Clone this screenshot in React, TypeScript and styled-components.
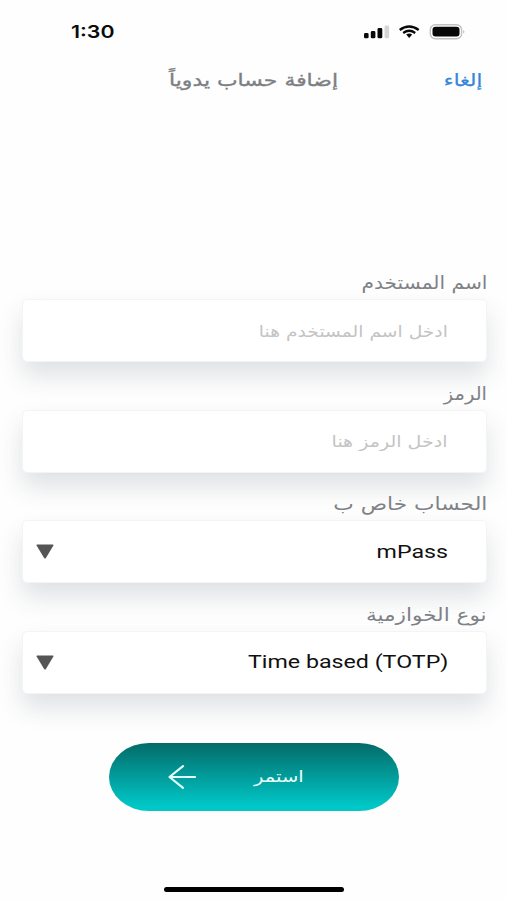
import React from 'react';
import styled, { createGlobalStyle } from 'styled-components';

const GlobalStyle = createGlobalStyle`
  * { box-sizing: border-box; }
  body {
    margin: 0;
    background: #fefefe;
    font-family: "DejaVu Sans", sans-serif;
  }
`;

const Screen = styled.main`
  width: 507px;
  height: 900px;
  overflow: hidden;
  display: flex;
  flex-direction: column;
  background: #fefefe;
`;

const Stretch = styled.span<{ $x?: number; $y?: number; $from?: string }>`
  display: inline-block;
  white-space: nowrap;
  transform: scale(${p => p.$x ?? 1}, ${p => p.$y ?? 1});
  transform-origin: ${p => p.$from ?? 'right'} center;
`;

const StatusBar = styled.header`
  height: 64px;
  flex: none;
  display: flex;
  align-items: center;
  justify-content: space-between;
  padding: 0 41px 0 71px;
`;

const Clock = styled.time`
  font: 600 17.5px/24px Inter, sans-serif;
  color: #0b0b0b;
`;

const StatusIcons = styled.svg`
  display: block;
  width: 104px;
  height: 20px;
`;

const NavBar = styled.nav`
  height: 32px;
  flex: none;
  direction: rtl;
  display: grid;
  grid-template-columns: 144px 1fr;
  align-items: center;
  padding: 0 25px 0 20px;
  line-height: 32px;
`;

const Cancel = styled.a`
  color: #3585da;
  font-size: 17px;
  -webkit-text-stroke: 0.25px #3585da;
`;

const Title = styled.h1`
  margin: 0;
  color: #7c7f83;
  font-size: 17px;
  font-weight: 400;
  -webkit-text-stroke: 0.35px #7c7f83;
`;

const Form = styled.form`
  direction: rtl;
  display: flex;
  flex-direction: column;
  padding: 171px 20px 0 22px;
`;

const Field = styled.div`
  height: 110.5px;
  display: flex;
  flex-direction: column;
`;

const Label = styled.label`
  height: 32px;
  line-height: 31px;
  font-size: 18px;
  color: #7e8287;
`;

const Box = styled.div`
  height: 63px;
  flex: none;
  display: flex;
  align-items: center;
  justify-content: space-between;
  padding: 0 38px 0 13px;
  background: #fff;
  border: 1px solid #f3f4f5;
  border-radius: 5px;
  box-shadow: 0 14px 24px rgba(45, 60, 75, 0.15);
`;

const Placeholder = styled.span`
  font-size: 17px;
  color: #c4c4c4;
`;

const Value = styled.span`
  font: 400 19.5px/28px Roboto, sans-serif;
  direction: ltr;
  color: #101010;
`;

const Caret = styled.svg`
  width: 18px;
  height: 15px;
  fill: #555;
`;

const Submit = styled.button`
  width: 290px;
  height: 68px;
  flex: none;
  margin: 34px 0 0 109px;
  padding: 0 95px 0 59px;
  border: 0;
  border-radius: 40px / 34px;
  display: flex;
  align-items: center;
  justify-content: space-between;
  background: linear-gradient(#036b68, #00c8c8 94%);
  color: #e9fffd;
  font: 400 16px/24px "DejaVu Sans", sans-serif;
`;

const Arrow = styled.svg`
  width: 28px;
  height: 24px;
  fill: none;
  stroke: #e2fffd;
  stroke-width: 2.2;
  stroke-linecap: round;
  stroke-linejoin: round;
`;

const HomeIndicator = styled.div`
  width: 180px;
  height: 5px;
  flex: none;
  margin: auto 0 8.5px 164px;
  border-radius: 3px;
  background: #000;
`;

const fields = [
  { label: 'اسم المستخدم', text: 'ادخل اسم المستخدم هنا', lx: 1.12, tx: 1.1 },
  { label: 'الرمز', text: 'ادخل الرمز هنا', lx: 1.08, tx: 1.12 },
  { label: 'الحساب خاص ب', text: 'mPass', select: true, lx: 1.21, tx: 1.19 },
  { label: 'نوع الخوازمية', text: 'Time based (TOTP)', select: true, lx: 1.2, tx: 1.19 },
];

export default function App() {
  return (
    <Screen>
      <GlobalStyle />
      <StatusBar>
        <Clock><Stretch $x={1.22} $from="left">1:30</Stretch></Clock>
        <StatusIcons viewBox="0 0 104 20">
          <g fill="#080808">
            <rect x="2" y="11" width="4.6" height="5.3" rx="1.4" />
            <rect x="8.8" y="9" width="4.6" height="7.3" rx="1.4" />
            <rect x="15.5" y="6" width="4.8" height="10.3" rx="1.4" />
            <rect x="22.5" y="3.5" width="4.6" height="12.8" rx="1.4" fill="#d5d5d5" />
            <path d="M44.2 12.6q3-2.3 6 0l-3 3.3z" />
            <rect x="70.5" y="4.8" width="27" height="9.8" rx="3" />
          </g>
          <g fill="none" stroke="#080808" strokeWidth="2.3">
            <path d="M37.7 8q9.5-7 19 0M41.2 11q6-4.4 12 0" />
          </g>
          <rect x="68.3" y="2.7" width="31.3" height="14" rx="5" fill="none" stroke="#c2c2c2" strokeWidth="1.4" />
          <path d="M101.4 8v3.6q2-1.8 0-3.6" fill="#aaa" />
        </StatusIcons>
      </StatusBar>
      <NavBar>
        <Cancel><Stretch $x={1.23}>إلغاء</Stretch></Cancel>
        <Title><Stretch $x={1.29}>إضافة حساب يدوياً</Stretch></Title>
      </NavBar>
      <Form>
        {fields.map(f => (
          <Field key={f.label}>
            <Label><Stretch $x={f.lx}>{f.label}</Stretch></Label>
            <Box>
              {f.select
                ? <Value><Stretch $x={f.tx} $y={0.96}>{f.text}</Stretch></Value>
                : <Placeholder><Stretch $x={f.tx} $y={0.94}>{f.text}</Stretch></Placeholder>}
              {f.select && (
                <Caret viewBox="0 0 18 15">
                  <path d="M1.2.5h15.6q1 0 .6.9l-7.5 12.5q-.9 1.1-1.8 0L.6 1.4Q.2.5 1.2.5z" />
                </Caret>
              )}
            </Box>
          </Field>
        ))}
      </Form>
      <Submit type="button">
        <Arrow viewBox="0 0 28 24"><path d="M27 12H1.5M15 1.2 1.5 12 15 22.8" /></Arrow>
        <Stretch $x={1.22}>استمر</Stretch>
      </Submit>
      <HomeIndicator />
    </Screen>
  );
}
